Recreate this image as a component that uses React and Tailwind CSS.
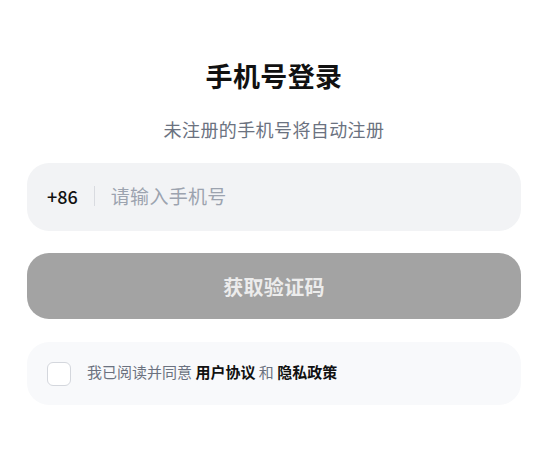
export default function App() {
  return (
    <div
      className="min-h-screen w-full bg-white pl-[27px] pr-[24px] pt-[58px]"
      style={{ fontFamily: '"Noto Sans CJK SC", "Noto Sans", sans-serif' }}
    >
      <h1 className="text-center text-[27px] font-bold leading-[36px] tracking-[0.4px] text-[#111111]">
        手机号登录
      </h1>
      <p className="mt-[21px] text-center text-[18px] leading-[28px] tracking-[0.4px] text-[#6b7280]">
        未注册的手机号将自动注册
      </p>

      <div className="mt-[20px] flex h-[68px] items-center rounded-[22px] bg-[#f2f3f5] pb-[2px] pl-5">
        <span className="text-[18px] font-medium text-[#111111]">+86</span>
        <span className="mx-4 h-5 w-px bg-[#d9dbe0]" />
        <input
          className="flex-1 bg-transparent text-[19px] tracking-[0.3px] text-[#111111] outline-none placeholder:text-[#9ca3af]"
          placeholder="请输入手机号"
        />
      </div>

      <button className="mt-[22px] flex h-[66px] w-full items-center justify-center rounded-[22px] bg-[#a3a3a3] pt-[1px] text-[20px] font-bold tracking-[0.3px] text-[#ececec]">
        获取验证码
      </button>

      <div className="mt-[23px] flex h-[63px] items-center gap-4 rounded-[22px] bg-[#f8f9fb] px-5">
        <span className="h-6 w-6 shrink-0 rounded-md border border-[#d4d7dd] bg-white" />
        <p className="pb-[3px] text-[15px] text-[#6b7280]">
          我已阅读并同意 <span className="font-bold text-[#111111]">用户协议</span> 和{' '}
          <span className="font-bold text-[#111111]">隐私政策</span>
        </p>
      </div>
    </div>
  );
}
